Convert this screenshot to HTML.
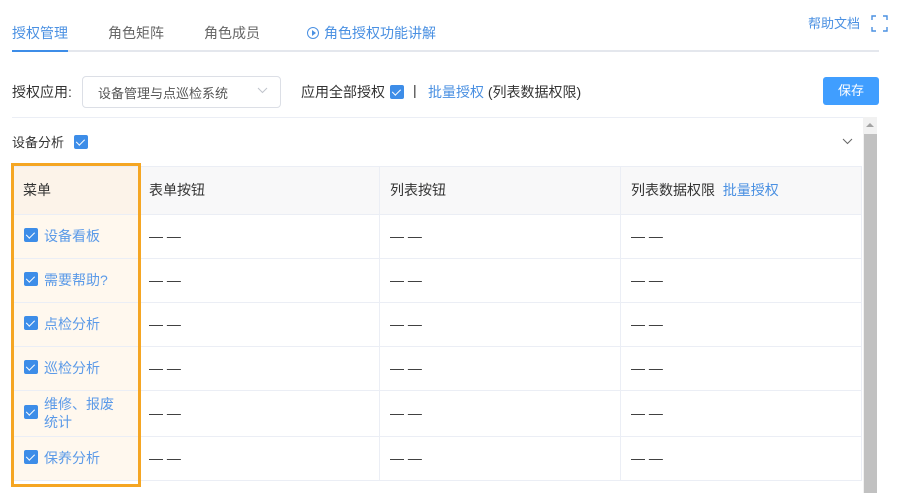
<!DOCTYPE html>
<html><head><meta charset="utf-8"><style>
body{margin:0;width:900px;height:493px;overflow:hidden;background:#fff;font-family:"Liberation Sans","Noto Sans CJK SC",sans-serif;font-size:14px;color:#333;position:relative}
.a{position:absolute}
.blue{color:#4a90e2}
.cb{position:absolute;width:14px;height:14px;background:#3d8de8;border-radius:2px}
.cb:after{content:"";position:absolute;left:4px;top:1.5px;width:3.5px;height:7px;border:solid #fff;border-width:0 1.5px 1.5px 0;transform:rotate(45deg)}
table{position:absolute;left:12px;top:166px;border-collapse:collapse;width:849px;table-layout:fixed}
td{border:1px solid #ebeef5;padding:0 0 2px 10px;font-size:14px}
tr.h td{height:45px;background:#f8f8f9;color:#333}
tr.r td{height:41px}
td.m{background:#fff8ee;position:relative;padding-left:31px;color:#5b9ae8}
tr.h td.m{background:#fcf3e9;color:#333;padding-left:10px}
</style></head><body>
<div class="a blue" style="left:12px;top:23px;font-size:14px">授权管理</div>
<div class="a" style="left:108px;top:23px;color:#666">角色矩阵</div>
<div class="a" style="left:204px;top:23px;color:#666">角色成员</div>
<div class="a blue" style="left:307px;top:23px"><span style="display:inline-block;width:10px;height:10px;border:1.3px solid #4a90e2;border-radius:50%;position:relative;margin-right:5px;vertical-align:-1px"><span style="position:absolute;left:3.5px;top:2px;border-left:4px solid #4a90e2;border-top:3px solid transparent;border-bottom:3px solid transparent"></span></span>角色授权功能讲解</div>
<div class="a" style="left:12px;top:50px;width:867px;height:2px;background:#e4e7ed"></div>
<div class="a" style="left:12px;top:50px;width:56px;height:2px;background:#3d8de8"></div>
<div class="a blue" style="left:808px;top:13px;font-size:13px">帮助文档</div>
<svg class="a" style="left:871px;top:15px" width="17" height="17" fill="none" stroke="#4a90e2" stroke-width="1.4"><path d="M1 5V1H5M12 1H16V5M16 12V16H12M5 16H1V12"/></svg>
<div class="a" style="left:12px;top:82px">授权应用:</div>
<div class="a" style="left:82px;top:76px;width:197px;height:30px;border:1px solid #dcdfe6;border-radius:4px"></div>
<div class="a" style="left:98px;top:83px;font-size:13px;color:#555">设备管理与点巡检系统</div>
<svg class="a" style="left:257px;top:87px" width="11" height="7" fill="none" stroke="#c0c4cc" stroke-width="1"><path d="M1 1L5.5 5.5L10 1"/></svg>
<div class="a" style="left:301px;top:82px">应用全部授权</div>
<div class="cb" style="left:390px;top:85px"></div>
<div class="a" style="left:413px;top:82px">|</div>
<div class="a" style="left:428px;top:82px"><span class="blue">批量授权</span> (列表数据权限)</div>
<div class="a" style="left:823px;top:77px;width:56px;height:28px;background:#409eff;border-radius:3px;color:#fff;font-size:13px;line-height:28px;text-align:center">保存</div>
<div class="a" style="left:12px;top:117px;width:851px;height:1px;background:#ebeef5"></div>
<div class="a" style="left:12px;top:132px;font-size:13px">设备分析</div>
<div class="cb" style="left:74px;top:135px"></div>
<svg class="a" style="left:842px;top:138px" width="11" height="7" fill="none" stroke="#666" stroke-width="1"><path d="M1 1L5.5 5.5L10 1"/></svg>
<div class="a" style="left:863px;top:117px;width:14px;height:376px;background:#f1f1f1"></div>
<div class="a" style="left:864px;top:134px;width:13px;height:359px;background:#c1c1c1"></div>
<div class="a" style="left:866px;top:123px;border-bottom:4px solid #a3a3a3;border-left:4px solid transparent;border-right:4px solid transparent"></div>
<table>
<colgroup><col style="width:126px"><col style="width:241px"><col style="width:241px"><col style="width:241px"></colgroup>
<tr class="h"><td class="m">菜单</td><td>表单按钮</td><td>列表按钮</td><td>列表数据权限 &nbsp;<span class="blue">批量授权</span></td></tr>
<tr class="r"><td class="m"><span class="cb" style="left:11px;top:13px"></span>设备看板</td><td>— —</td><td>— —</td><td>— —</td></tr>
<tr class="r"><td class="m"><span class="cb" style="left:11px;top:13px"></span>需要帮助?</td><td>— —</td><td>— —</td><td>— —</td></tr>
<tr class="r"><td class="m"><span class="cb" style="left:11px;top:13px"></span>点检分析</td><td>— —</td><td>— —</td><td>— —</td></tr>
<tr class="r"><td class="m"><span class="cb" style="left:11px;top:13px"></span>巡检分析</td><td>— —</td><td>— —</td><td>— —</td></tr>
<tr class="r"><td class="m" style="height:43px;line-height:18px"><span class="cb" style="left:11px;top:14px"></span>维修、报废<br>统计</td><td>— —</td><td>— —</td><td>— —</td></tr>
<tr class="r"><td class="m"><span class="cb" style="left:11px;top:13px"></span>保养分析</td><td>— —</td><td>— —</td><td>— —</td></tr>
</table>
<div class="a" style="left:11px;top:163px;width:124px;height:318px;border:3px solid #f5a623"></div>
</body></html>
